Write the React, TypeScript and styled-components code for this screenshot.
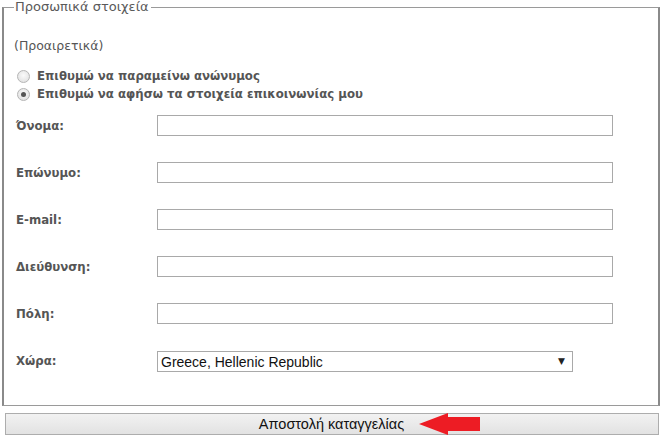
import React, { useState } from "react";
import styled, { createGlobalStyle } from "styled-components";

const GlobalStyle = createGlobalStyle`
  html, body {
    margin: 0;
    padding: 0;
    background: #ffffff;
  }
  body {
    font-family: "DejaVu Sans", Verdana, sans-serif;
    color: #555555;
  }
`;

const fields = ["Όνομα:", "Επώνυμο:", "E-mail:", "Διεύθυνση:", "Πόλη:"];

const App = () => {
  const [mode, setMode] = useState("contact");
  const [country, setCountry] = useState("GR");

  return (
    <Page>
      <GlobalStyle />
      <Fieldset>
        <Legend>Προσωπικά στοιχεία</Legend>
        <Note>(Προαιρετικά)</Note>
        <RadioGroup>
          <RadioRow>
            <Radio checked={mode === "anon"} onClick={() => setMode("anon")} />
            <RadioText>Επιθυμώ να παραμείνω ανώνυμος</RadioText>
          </RadioRow>
          <RadioRow>
            <Radio checked={mode === "contact"} onClick={() => setMode("contact")} />
            <RadioText>Επιθυμώ να αφήσω τα στοιχεία επικοινωνίας μου</RadioText>
          </RadioRow>
        </RadioGroup>
        <FormGrid>
          {fields.map((f) => (
            <React.Fragment key={f}>
              <Label>{f}</Label>
              <TextInput type="text" />
            </React.Fragment>
          ))}
          <Label>Χώρα:</Label>
          <SelectWrap>
            <Select value={country} onChange={(e) => setCountry(e.target.value)}>
              <option value="GR">Greece, Hellenic Republic</option>
              <option value="CY">Cyprus</option>
            </Select>
            <SelectArrow>▼</SelectArrow>
          </SelectWrap>
        </FormGrid>
      </Fieldset>
      <SubmitButton type="button">
        <ButtonText>Αποστολή καταγγελίας</ButtonText>
        <Arrow width="62" height="22" viewBox="0 0 62 22">
          <polygon
            points="0,11 29,0 29,4 61,4 61,18 29,18 29,22"
            fill="#ed1c24"
          />
        </Arrow>
      </SubmitButton>
    </Page>
  );
};

export default App;

const Page = styled.div`
  width: 663px;
  height: 441px;
  overflow: hidden;
`;

const Fieldset = styled.fieldset`
  box-sizing: border-box;
  margin: 0 0 0 2px;
  width: 658px;
  height: 406px;
  padding: 0 0 0 10px;
  border: 1px solid #9a9a9a;
  border-left: 2px solid #8a8a8a;
  border-right: 2px solid #8a8a8a;
`;

const Legend = styled.legend`
  padding: 0 2px 0 1px;
  margin-left: 0;
  font-size: 13px;
  line-height: 14px;
  color: #5a5a5a;
`;

const Note = styled.div`
  margin-top: 25px;
  font-size: 12.5px;
  line-height: 14px;
  color: #555555;
`;

const RadioGroup = styled.div`
  margin-top: 16px;
  display: flex;
  flex-direction: column;
  gap: 4px;
`;

const RadioRow = styled.label`
  display: flex;
  align-items: center;
  gap: 7px;
  padding-left: 3px;
  cursor: pointer;
`;

const Radio = styled.span<{ checked: boolean }>`
  box-sizing: border-box;
  width: 13px;
  height: 13px;
  border-radius: 50%;
  border: 1px solid #b5b5b5;
  background: radial-gradient(circle at 50% 40%, #fafafa, #dcdcdc);
  display: flex;
  align-items: center;
  justify-content: center;
  &::after {
    content: "";
    width: 5px;
    height: 5px;
    border-radius: 50%;
    background: #555555;
    display: ${({ checked }) => (checked ? "block" : "none")};
  }
`;

const RadioText = styled.span`
  font-size: 11.75px;
  line-height: 14px;
  font-weight: bold;
  color: #555555;
`;

const FormGrid = styled.div`
  margin-top: 14px;
  display: grid;
  grid-template-columns: 143px 456px;
  row-gap: 26px;
  align-items: center;
`;

const Label = styled.div`
  padding-left: 2px;
  font-size: 11.75px;
  font-weight: bold;
  color: #555555;
`;

const TextInput = styled.input`
  box-sizing: border-box;
  height: 21px;
  width: 456px;
  border: 1px solid #a9a9a9;
  background: #ffffff;
  padding: 0 4px;
  outline: none;
  font-family: "Liberation Sans", Arial, sans-serif;
  font-size: 13px;
`;

const SelectWrap = styled.div`
  position: relative;
  width: 416px;
  height: 21px;
  margin-top: 1px;
`;

const Select = styled.select`
  box-sizing: border-box;
  appearance: none;
  width: 100%;
  height: 21px;
  border: 1px solid #a9a9a9;
  border-radius: 0;
  background: #ffffff;
  padding: 0 0 0 3px;
  font-family: "Liberation Sans", Arial, sans-serif;
  font-size: 14px;
  color: #111111;
  outline: none;
`;

const SelectArrow = styled.span`
  position: absolute;
  right: 8px;
  top: 5px;
  font-size: 9px;
  line-height: 10px;
  color: #222222;
  pointer-events: none;
  font-family: "DejaVu Sans", sans-serif;
`;

const SubmitButton = styled.button`
  box-sizing: border-box;
  margin: 7px 0 0 5px;
  width: 654px;
  height: 22px;
  border: 1px solid #adadad;
  border-radius: 0;
  background: linear-gradient(#f2f2f2, #e2e2e2);
  font-family: "Liberation Sans", Arial, sans-serif;
  color: #111111;
  display: flex;
  align-items: center;
  justify-content: center;
  gap: 15px;
  padding: 0 0 0 76px;
  cursor: pointer;
`;

const ButtonText = styled.span`
  font-size: 14.5px;
`;

const Arrow = styled.svg`
  display: block;
  flex: none;
`;
